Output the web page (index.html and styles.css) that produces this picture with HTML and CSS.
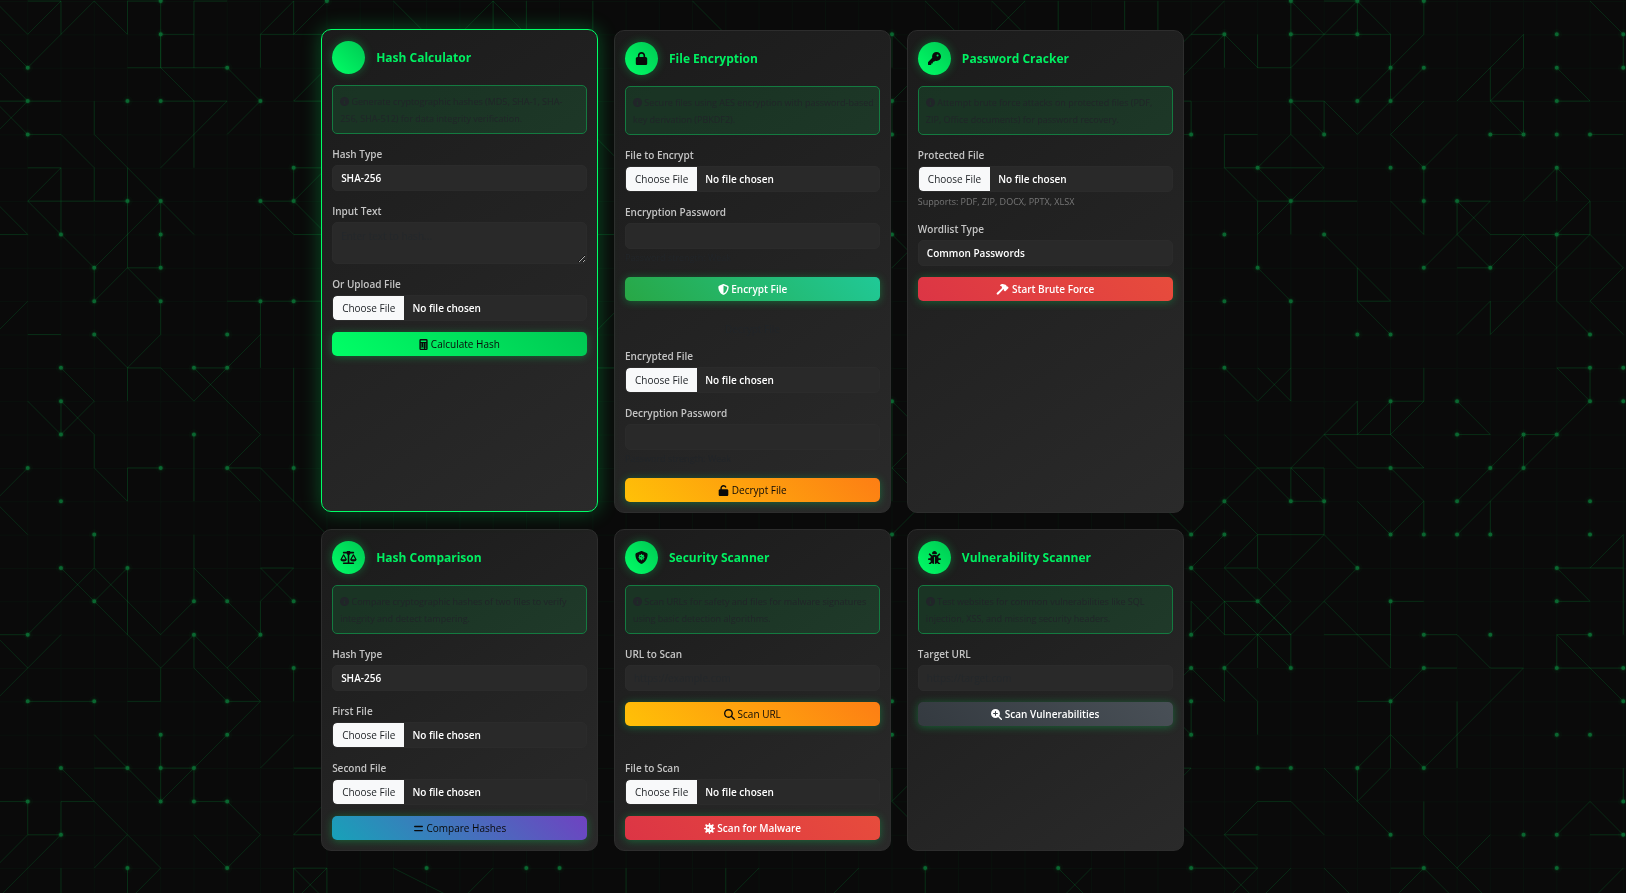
FILE: index.html
```html
<!DOCTYPE html>
<html lang="en">
<head>
<meta charset="utf-8">
<meta name="viewport" content="width=device-width, initial-scale=1">
<title>Security Tools</title>
<link rel="stylesheet" href="styles.css">
</head>
<body>
<svg class="circuit" aria-hidden="true">
  <defs>
    <path id="nodes" d="M5 0h0M10 0h0M5 1h0M1 2h0M7 2h0M1 3h0M4 3h0M5 3h0M8 3h0M1 4h0M9 5h0M4 6h0M5 6h0M8 6h0M9 6h0M2 7h0M5 7h0M3 8h0M5 8h0M3 9h0M5 9h0M8 9h0M9 9h0M3 10h0M7 10h0M2 11h0M6 11h0M7 11h0M2 12h0M2 13h0M6 13h0M1 14h0M5 14h0M7 14h0M9 14h0M2 15h0M3 16h0M2 17h0M4 17h0M3 18h0M6 18h0M7 18h0M9 18h0M1 19h0M6 19h0M8 19h0M9 20h0M1 21h0M3 21h0M7 21h0M5 22h0M7 22h0M2 23h0M4 23h0M5 23h0M6 23h0M1 24h0M5 24h0M6 24h0M7 24h0M2 25h0M4 26h0M7 26h0
    M27 1h0M27 3h0M27 4h0M27 7h0M27 12h0M27 16h0M27 21h0M27 22h0M13 26h0M16 26h0M17 26h0M28 26h0M32 26h0
    M39 0h0M41 0h0M43 0h0M37 1h0M39 1h0M41 1h0M47 1h0M49 1h0M42 2h0M43 2h0M47 2h0M49 2h0M39 3h0M41 3h0M42 3h0M47 3h0M36 4h0M40 4h0M45 4h0M46 4h0M47 4h0M48 4h0M38 5h0M42 5h0M43 5h0M47 5h0M39 6h0M43 6h0M44 6h0M37 7h0M40 7h0M47 7h0M38 8h0M43 8h0M45 8h0M37 9h0M39 9h0M41 10h0M42 10h0M48 10h0M37 11h0M48 11h0M49 11h0M42 12h0M44 12h0M48 12h0M49 12h0M44 13h0M46 13h0M47 13h0M42 14h0M45 14h0M46 14h0M37 15h0M39 15h0M40 15h0M44 15h0M48 15h0M36 16h0M37 16h0M42 16h0M43 16h0M44 16h0M45 16h0M48 16h0M36 17h0M41 17h0M47 17h0M38 18h0M42 18h0M47 18h0M36 19h0M43 19h0M45 19h0M48 19h0M36 20h0M37 20h0M39 20h0M43 20h0M47 20h0M49 20h0M36 21h0M42 21h0M49 21h0M36 22h0M47 22h0M48 22h0M38 23h0M39 23h0M41 23h0M43 23h0M49 24h0M42 25h0M46 25h0M47 25h0M49 25h0M36 26h0M43 26h0M47 26h0"/>
    <path id="traces" d="M0 0L1 1L2 0M1 0H2V1L3 0L4 1V0H5V2M5 1H6M6 2V0H7M8 2V1L9 0V1L10 0M8 1H10M0 1L1 2L2 1M0 2L1 3M0 3H2M0 3L1 4M0 4L1 3M1 4H2L3 5V6M3 3V4L5 6L6 7M4 2H7L8 3L7 4M5 2L6 3M5 3H7L5 5M6 3V5M5 2V1M10 2L9 3H10M1 5H2V7M2 5L1 6H4M1 6L3 8L5 6M4 5V8M5 6V8H4L5 9V10L4 11L3 10M3 8V9L4 8M0 6L1 7H0M0 10L1 9M1 10H2M8 6H9V5H10M8 6L9 7H10M10 5L9 6L10 7M7 9H10M8 9V11M8 10L6 12L5 11H4V12M7 11H6L8 13L7 14M2 11L3 12L2 13V12L3 13V14L4 15V14H5M1 12L2 13M9 11V15M6 13V15
    M0 15L1 14M0 15L1 16M3 16V17L1 19H0M7 14H8L10 16M7 14L8 15M6 16V18M6 17L8 19L7 20M8 19V18L9 17H8L9 18M2 17L5 20L6 19L8 21H7L6 20V19M3 18L4 17V19M3 17L5 19L6 18M0 19L1 20L2 19M1 20L0 21M1 21H3M4 21H5V20M9 20V21M8 21L5 24L3 22M5 22V24M5 23H6V24H7L8 25L7 26L6 25M3 23H4M8 23L9 22M9 23H10M2 23L5 26L4 27M3 26L4 25M0 24H1V25H2V24H3M1 25L0 26M2 25L0 27M10 24L9 25H10M9 26H10L9 27V26L10 27V26M2 26V27M4 26V27
    M12 0L13 1M14 1L15 0L16 1V0M15 0V1M18 0V1M21 0L22 1M28 0L29 1M31 0L30 1M30 0L31 1M32 0V1M34 0V1M35 0V1M28 2L27 1V2M28 2L27 3V4M27 7L28 8M28 7L27 8M27 12V15M27 12L28 13L27 14L28 15M27 16L28 15M19 5L18 4M18 7H19M18 11H19M18 10L19 9M27 23V24L28 23M27 24L28 25M12 26L14 27M14 27L15 26M19 26V27M22 26V27L23 26M26 26L25 27M28 26V27M32 26L33 27M33 26L32 27
    M37 0L35 2M36 1H37V2M35 3L37 1L38 2H39L41 0L42 1V3M38 1V2M39 0V4M39 0L40 1M40 0H41V1M39 1H42M43 0V1L41 3M43 2L41 4L40 3V4L39 3H40M35 3H36V4H35M44 3L46 1V2L45 3V2M46 3H45L46 4V3M45 4H46M47 2L48 3H47M48 0L49 1V2M48 4H49M38 4H37V5H40L39 4L38 5L39 6L40 5M37 5L38 6H41M39 7V6L38 7V6M38 7V8L39 9V12M39 11L38 12L37 11M38 11L39 12M43 3L42 4L43 5L44 4M43 5V7L42 6M43 8L45 6H44V7L45 8H44M44 6L45 7H48V6L47 5V6M46 6L47 5M48 6L47 7V9L48 10M45 8L46 7L47 8L45 10V9L44 10M47 8L48 7L49 8L48 9L49 10M40 7L42 9H41V8M41 9L42 10M43 11V12H42L41 13V12L39 14M42 12V13L43 12M40 13H42L43 14H41L40 13M44 12L45 13H44M47 11H48V12L47 11M48 12L44 16M47 13H46V14M46 13L44 15
    M37 13L39 15H40V14H38L36 16L35 15M39 14L40 15V16L38 18M39 14V15M37 15L38 16H40L41 17L39 19L37 17H38V16L37 17M42 14L43 15V16M43 15L42 16L41 15M45 15V16M37 16L36 17L39 20V19H37V18H38L39 19M38 17L39 18L37 20L38 21V22M36 18L37 19M36 18V19L37 18M38 19V20M40 18L42 20V18H43M40 19H42M43 19H44L45 20H46L43 23L42 22V23M42 22L41 23V24L42 23M42 22V21H41M42 21L43 20H44M44 21V23M40 23L42 25M36 20L37 21V20M36 21V22L35 21L36 20M35 24L36 23H35M38 23H39M40 25L39 24H38L37 25H38M37 25L38 26H36M35 24L38 27M37 27L38 26M39 26L38 27M40 26L41 27M42 26H43L44 27M43 26L42 27M43 24V25L45 27M44 26L45 25M49 17H47L48 18H47M48 17L49 16V19M47 19H48M49 21L47 19V20H49M49 23V24M47 25L48 24L49 25H48M48 27L49 26"/>
    <pattern id="grid" width="33.24" height="33.35" patternUnits="userSpaceOnUse" patternTransform="translate(-6 1)">
      <path d="M0 0H34M0 0V34" stroke="#00ff66" stroke-opacity=".03" stroke-width="2"/>
    </pattern>
  </defs>
  <rect width="100%" height="100%" fill="url(#grid)"/>
  <g transform="translate(-5.5 1) scale(33.24 33.35)">
    <use href="#traces" class="trace"/>
    <use href="#nodes" class="node-glow"/>
    <use href="#nodes" class="node-halo"/>
    <use href="#nodes" class="node"/>
  </g>
</svg>

<svg class="symbols" aria-hidden="true">
  <symbol id="info" viewBox="0 0 512 512"><path d="M256 512A256 256 0 1 0 256 0a256 256 0 1 0 0 512zM216 336h24V272H216c-13.300 0-24-10.700-24-24s10.700-24 24-24h48c13.300 0 24 10.700 24 24v88h8c13.300 0 24 10.700 24 24s-10.700 24-24 24H216c-13.300 0-24-10.700-24-24s10.700-24 24-24zm40-208a32 32 0 1 1 0 64 32 32 0 1 1 0-64z"/></symbol>
  <symbol id="lock" viewBox="0 0 448 512"><path d="M144 144v48H304V144c0-44.200-35.800-80-80-80s-80 35.800-80 80zM80 192V144C80 64.500 144.500 0 224 0s144 64.500 144 144v48h16c35.300 0 64 28.700 64 64V448c0 35.300-28.700 64-64 64H64c-35.300 0-64-28.700-64-64V256c0-35.300 28.700-64 64-64H80z"/></symbol>
  <symbol id="unlock" viewBox="0 0 448 512"><path d="M144 144c0-44.200 35.800-80 80-80c31.900 0 59.400 18.600 72.300 45.700c7.600 16 26.700 22.800 42.600 15.200s22.800-26.700 15.200-42.600C331 33.700 281.500 0 224 0C144.500 0 80 64.500 80 144v48H64c-35.300 0-64 28.700-64 64V448c0 35.300 28.700 64 64 64H384c35.300 0 64-28.700 64-64V256c0-35.300-28.700-64-64-64H144V144z"/></symbol>
  <symbol id="key" viewBox="0 0 512 512"><path d="M336 352c97.200 0 176-78.800 176-176S433.200 0 336 0S160 78.800 160 176c0 18.700 2.900 36.800 8.300 53.700L7 391c-4.500 4.500-7 10.600-7 17v80c0 13.300 10.700 24 24 24h80c13.300 0 24-10.700 24-24V448h40c13.300 0 24-10.700 24-24V384h40c6.400 0 12.500-2.500 17-7l33.300-33.300c16.900 5.400 35 8.300 53.700 8.300zM376 96a40 40 0 1 1 0 80 40 40 0 1 1 0-80z"/></symbol>
  <symbol id="scales" viewBox="0 0 640 512"><path fill-rule="evenodd" d="M128 32h118a80 80 0 0 1 148 0h118a32 32 0 0 1 0 64H396a80 80 0 0 1-44 57v295h160a32 32 0 0 1 0 64H128a32 32 0 0 1 0-64h160V153a80 80 0 0 1-44-57H128a32 32 0 0 1 0-64zM128 196L56 320H200zM5 323L108 142a23 23 0 0 1 40 0L251 323c10 18 4 90-123 90S-5 341 5 323zM512 196L440 320H584zM389 323L492 142a23 23 0 0 1 40 0L635 323c10 18 4 90-123 90S379 341 389 323z"/></symbol>
  <symbol id="shield-virus" viewBox="0 0 512 512"><path fill-rule="evenodd" d="M269 3L458 83c22 9 38 31 38 57c0 99-41 281-214 363c-17 8-36 8-52 0C57 421 16 239 16 140c0-26 16-48 38-57L243 3c8-4 18-4 26 0zM256 112a17 17 0 0 0-17 17c0 27-32 40-51 21a17 17 0 0 0-24 24c19 19 6 51-21 51a17 17 0 0 0 0 34c27 0 40 32 21 51a17 17 0 0 0 24 24c19-19 51-6 51 21a17 17 0 0 0 34 0c0-27 32-40 51-21a17 17 0 0 0 24-24c-19-19-6-51 21-51a17 17 0 0 0 0-34c-27 0-40-32-21-51a17 17 0 0 0-24-24c-19 19-51 6-51-21a17 17 0 0 0-17-17z"/><circle cx="226" cy="218" r="24"/><circle cx="286" cy="270" r="20"/></symbol>
  <symbol id="bug" viewBox="0 0 512 512"><path d="M256 0c53 0 96 43 96 96v4c0 15-13 28-28 28H188c-15 0-28-13-28-28v-4c0-53 43-96 96-96zM41 105a32 32 0 0 1 46 0l64 64 9 10c16-12 35-19 56-19h80c21 0 40 7 56 19l73-74a32 32 0 0 1 46 46l-74 73c11 15 18 32 19 52v12h64a32 32 0 0 1 0 64h-64c0 26-6 50-16 71l71 64a32 32 0 0 1-46 46l-62-63c-26 24-62 38-91 41V240a16 16 0 0 0-32 0v271c-33-4-65-17-91-41l-62 63a32 32 0 0 1-46-46l71-64c-10-21-16-45-16-71H32a32 32 0 0 1 0-64h64v-12c1-20 8-37 19-52l-74-73a32 32 0 0 1 0-46z"/></symbol>
  <symbol id="calculator" viewBox="0 0 384 512"><path fill-rule="evenodd" d="M64 0H320a64 64 0 0 1 64 64V448a64 64 0 0 1-64 64H64a64 64 0 0 1-64-64V64A64 64 0 0 1 64 0zM64 64V144H320V64zM64 208V256H112V208zM168 208V256H216V208zM272 208V256H320V208zM64 304V352H112V304zM168 304V352H216V304zM272 304V352H320V304zM64 400V448H216V400zM272 400V448H320V400z"/></symbol>
  <symbol id="shield" viewBox="0 0 512 512"><path d="M256 0c4.600 0 9.200 1 13.400 2.900L457.700 82.800c22 9.300 38.400 31 38.300 57.200c-.5 99.200-41.300 280.700-213.600 363.200c-16.700 8-36.100 8-52.800 0C57.300 420.700 16.500 239.200 16 140c-.1-26.200 16.300-47.900 38.300-57.200L242.700 2.900C246.800 1 251.400 0 256 0zm0 66.800V444.800C394 378 431.100 230.100 432 141.400L256 66.800z"/></symbol>
  <symbol id="hammer" viewBox="0 0 576 512"><path d="M430 30L300 2c-40-8-78 4-106 32l-16 16c-10 10-8 20 4 26l74 36v26c0 16 6 30 17 41l-26 26L32 404c-24 22-24 56-4 78s56 20 78-4l198-216 27-26 20 20c-8 14-6 30 5 41l26 26c14 14 38 14 52 0l124-124c14-14 14-38 0-52l-26-26c-11-11-27-13-41-5l-18-18V82c0-24-18-46-43-52z"/></symbol>
  <symbol id="equals" viewBox="0 0 448 512"><path d="M48 128c-17.700 0-32 14.300-32 32s14.300 32 32 32H400c17.700 0 32-14.300 32-32s-14.300-32-32-32H48zm0 192c-17.700 0-32 14.300-32 32s14.300 32 32 32H400c17.700 0 32-14.300 32-32s-14.300-32-32-32H48z"/></symbol>
  <symbol id="search" viewBox="0 0 512 512"><path d="M416 208c0 45.900-14.900 88.300-40 122.700L502.600 457.400c12.500 12.500 12.500 32.800 0 45.300s-32.800 12.500-45.300 0L330.700 376c-34.400 25.200-76.800 40-122.700 40C93.100 416 0 322.900 0 208S93.100 0 208 0S416 93.100 416 208zM208 352a144 144 0 1 0 0-288 144 144 0 1 0 0 288z"/></symbol>
  <symbol id="search-plus" viewBox="0 0 512 512"><path fill-rule="evenodd" d="M416 208c0 46-15 88-40 123L503 457a32 32 0 0 1-46 46L331 376C296 401 254 416 208 416A208 208 0 1 1 416 208zM184 296a24 24 0 0 0 48 0V232h64a24 24 0 0 0 0-48H232V120a24 24 0 0 0-48 0V184H120a24 24 0 0 0 0 48H184z"/></symbol>
  <symbol id="virus" viewBox="0 0 512 512"><path fill-rule="evenodd" d="M256 0a32 32 0 0 1 32 32v20c0 40 48 60 76 32l15-15a32 32 0 0 1 64 64l-15 15c-28 28-8 76 32 76h20a32 32 0 0 1 0 64h-20c-40 0-60 48-32 76l15 15a32 32 0 0 1-64 64l-15-15c-28-28-76-8-76 32v20a32 32 0 0 1-64 0v-20c0-40-48-60-76-32l-15 15a32 32 0 0 1-64-64l15-15c28-28 8-76-32-76H32a32 32 0 0 1 0-64h20c40 0 60-48 32-76l-15-15a32 32 0 0 1 64-64l15 15c28 28 76 8 76-32V32a32 32 0 0 1 32-32zM192 160a48 48 0 1 0 1 0zM304 256a32 32 0 1 0 1 0z"/></symbol>
</svg>

<main class="tools">
  <section class="card card-active">
    <header class="card-head"><span class="badge"></span><h2>Hash Calculator</h2></header>
    <p class="info"><svg class="icon"><use href="#info"/></svg> Generate cryptographic hashes (MD5, SHA-1, SHA-<br>256, SHA-512) for data integrity verification.</p>
    <div class="field"><label for="calc-type">Hash Type</label><select id="calc-type"><option>SHA-256</option></select></div>
    <div class="field"><label for="calc-text">Input Text</label><textarea id="calc-text" placeholder="Enter text to hash..."></textarea></div>
    <div class="field"><label for="calc-file">Or Upload File</label><input type="file" id="calc-file"></div>
    <button class="btn btn-green"><svg class="icon narrow"><use href="#calculator"/></svg> Calculate Hash</button>
  </section>

  <section class="card">
    <header class="card-head"><span class="badge"><svg><use href="#lock"/></svg></span><h2>File Encryption</h2></header>
    <p class="info"><svg class="icon"><use href="#info"/></svg> Secure files using AES encryption with password-based key derivation (PBKDF2).</p>
    <div class="field"><label for="enc-file">File to Encrypt</label><input type="file" id="enc-file"></div>
    <div class="field"><label for="enc-pass">Encryption Password</label><input type="password" id="enc-pass"><p class="strength">Password strength: Weak</p></div>
    <button class="btn btn-teal"><svg class="icon"><use href="#shield"/></svg> Encrypt File</button>
    <h3 class="subhead">Decrypt File</h3>
    <div class="field"><label for="dec-file">Encrypted File</label><input type="file" id="dec-file"></div>
    <div class="field"><label for="dec-pass">Decryption Password</label><input type="password" id="dec-pass"><p class="strength">Password strength: Weak</p></div>
    <button class="btn btn-amber"><svg class="icon"><use href="#unlock"/></svg> Decrypt File</button>
  </section>

  <section class="card">
    <header class="card-head"><span class="badge"><svg><use href="#key"/></svg></span><h2>Password Cracker</h2></header>
    <p class="info"><svg class="icon"><use href="#info"/></svg> Attempt brute force attacks on protected files (PDF, ZIP, Office documents) for password recovery.</p>
    <div class="field"><label for="crack-file">Protected File</label><input type="file" id="crack-file"><p class="hint">Supports: PDF, ZIP, DOCX, PPTX, XLSX</p></div>
    <div class="field"><label for="crack-list">Wordlist Type</label><select id="crack-list"><option>Common Passwords</option></select></div>
    <button class="btn btn-red"><svg class="icon broad"><use href="#hammer"/></svg> Start Brute Force</button>
  </section>

  <section class="card">
    <header class="card-head"><span class="badge"><svg class="wide"><use href="#scales"/></svg></span><h2>Hash Comparison</h2></header>
    <p class="info"><svg class="icon"><use href="#info"/></svg> Compare cryptographic hashes of two files to verify integrity and detect tampering.</p>
    <div class="field"><label for="cmp-type">Hash Type</label><select id="cmp-type"><option>SHA-256</option></select></div>
    <div class="field"><label for="cmp-first">First File</label><input type="file" id="cmp-first"></div>
    <div class="field"><label for="cmp-second">Second File</label><input type="file" id="cmp-second"></div>
    <button class="btn btn-violet"><svg class="icon"><use href="#equals"/></svg> Compare Hashes</button>
  </section>

  <section class="card">
    <header class="card-head"><span class="badge"><svg><use href="#shield-virus"/></svg></span><h2>Security Scanner</h2></header>
    <p class="info"><svg class="icon"><use href="#info"/></svg> Scan URLs for safety and files for malware signatures using basic detection algorithms.</p>
    <div class="field"><label for="scan-url">URL to Scan</label><input type="url" id="scan-url" placeholder="https://example.com"></div>
    <button class="btn btn-amber btn-spaced"><svg class="icon"><use href="#search"/></svg> Scan URL</button>
    <div class="field"><label for="scan-file">File to Scan</label><input type="file" id="scan-file"></div>
    <button class="btn btn-red"><svg class="icon"><use href="#virus"/></svg> Scan for Malware</button>
  </section>

  <section class="card">
    <header class="card-head"><span class="badge"><svg><use href="#bug"/></svg></span><h2>Vulnerability Scanner</h2></header>
    <p class="info"><svg class="icon"><use href="#info"/></svg> Test websites for common vulnerabilities like SQL injection, XSS, and missing security headers.</p>
    <div class="field"><label for="vuln-url">Target URL</label><input type="url" id="vuln-url" placeholder="https://target.com"></div>
    <button class="btn btn-slate"><svg class="icon"><use href="#search-plus"/></svg> Scan Vulnerabilities</button>
  </section>
</main>
</body>
</html>
```

FILE: styles.css
```css
* {
  box-sizing: border-box;
}

body {
  margin: 0;
  background: #0a0a0a;
  color: #212529;
  font-family: "Open Sans", "Noto Sans", sans-serif;
  font-size: 10px;
  line-height: 18px;
}

h2, h3, p {
  margin: 0;
}

.symbols {
  display: none;
}

.circuit {
  position: fixed;
  inset: 0;
  width: 100%;
  height: 100%;
  z-index: -1;
}

.trace, .node, .node-halo, .node-glow {
  fill: none;
  stroke: #00ff66;
}

.circuit path {
  vector-effect: non-scaling-stroke;
}

.trace {
  stroke-opacity: .13;
  stroke-width: 1px;
}

.node, .node-halo, .node-glow {
  stroke-linecap: round;
}

.node {
  stroke: #0a6630;
  stroke-width: 4px;
}

.node-halo {
  stroke-opacity: .07;
  stroke-width: 6px;
}

.node-glow {
  stroke-opacity: .02;
  stroke-width: 11px;
}

.tools {
  display: grid;
  grid-template-columns: repeat(3, minmax(0, 1fr));
  gap: 16px;
  padding: 30px 27.2% 41px 19.75%;
}

.card {
  padding: 11px 10px 10px;
  border: 1px solid #2d2d2d;
  border-radius: 10px;
  background: linear-gradient(145deg, #1b1b1b, #2a2a2a);
}

.card-active {
  border-color: #00ff66;
  box-shadow: 0 0 20px rgba(0, 255, 102, .3);
  transform: translateY(-1px);
}

.card-head {
  display: flex;
  align-items: center;
  gap: 11px;
  margin-bottom: 11px;
}

.card-head h2 {
  color: #00f062;
  font-size: 12px;
  font-weight: 700;
  line-height: 18px;
}

.badge {
  display: flex;
  align-items: center;
  justify-content: center;
  width: 33px;
  height: 33px;
  border-radius: 50%;
  background: linear-gradient(45deg, #00ff66, #00c853);
  box-shadow: 0 0 10px rgba(0, 255, 102, .3);
  color: #0a0a0a;
}

.badge svg {
  width: 13px;
  height: 13px;
  fill: currentColor;
}

.badge .wide {
  width: 17px;
}

.info {
  margin-bottom: 11px;
  padding: 7px 4px 6px 7px;
  border: 1px solid #147a40;
  border-radius: 5px;
  background: rgba(0, 255, 102, .1);
  font-size: 9px;
  line-height: 17px;
}

.icon {
  display: inline-block;
  width: 11px;
  height: 11px;
  fill: currentColor;
  vertical-align: -2px;
}

.icon.narrow {
  width: 9px;
}

.icon.broad {
  width: 13px;
}

.info .icon {
  width: 9px;
  height: 9px;
  vertical-align: -1px;
}

.field {
  display: flex;
  flex-direction: column;
  margin-bottom: 11px;
}

.field label {
  margin-bottom: 2px;
  color: #c4c4c4;
  font-weight: 600;
}

input, select, textarea {
  width: 100%;
  height: 26px;
  margin: 0;
  padding: 0 8px;
  border: 1px solid #2b2b2b;
  border-radius: 5px;
  background: #292929;
  color: #fff;
  font-family: inherit;
  font-size: 10px;
  font-weight: 600;
  line-height: 18px;
  appearance: none;
}

textarea {
  height: 42px;
  padding: 4px 8px;
}

input[type="file"] {
  padding: 0;
  line-height: 24px;
}

::file-selector-button {
  height: 24px;
  margin: 0 8px 0 0;
  padding: 0 9px;
  border: 0;
  border-radius: 4px 0 0 4px;
  background: #f8f9fa;
  color: #212529;
  font-family: inherit;
  font-size: 10px;
  font-weight: 400;
}

::placeholder {
  color: #24282b;
  font-weight: 400;
  opacity: 1;
}

.strength {
  margin: 3px 0 2px;
  color: #212529;
  font-size: 9px;
  line-height: 12px;
}

.hint {
  margin-top: 3px;
  color: #777;
  font-size: 9px;
  line-height: 14px;
}

.subhead {
  margin: 19px 0 9px;
  font-size: 10px;
  font-weight: 400;
  text-align: center;
}

.btn {
  display: block;
  width: 100%;
  height: 24px;
  padding: 0;
  border: 0;
  border-radius: 5px;
  box-shadow: 0 1px 8px rgba(0, 255, 102, .3);
  color: #fff;
  font-family: inherit;
  font-size: 10px;
  font-weight: 600;
  line-height: 18px;
}

.btn-green {
  background: linear-gradient(45deg, #00ff66, #00c853);
  color: #0a0a0a;
}

.btn-teal {
  background: linear-gradient(45deg, #28a745, #20c997);
}

.btn-amber {
  background: linear-gradient(45deg, #ffc107, #fd7e14);
  color: #0a0a0a;
}

.btn-red {
  background: linear-gradient(45deg, #dc3545, #e74c3c);
}

.btn-violet {
  background: linear-gradient(45deg, #17a2b8, #6f42c1);
  color: #0a0a0a;
}

.btn-slate {
  background: linear-gradient(45deg, #343a40, #495057);
}

.btn-green, .btn-amber, .btn-violet {
  font-weight: 500;
}

.btn-spaced {
  margin-bottom: 33px;
}
```
